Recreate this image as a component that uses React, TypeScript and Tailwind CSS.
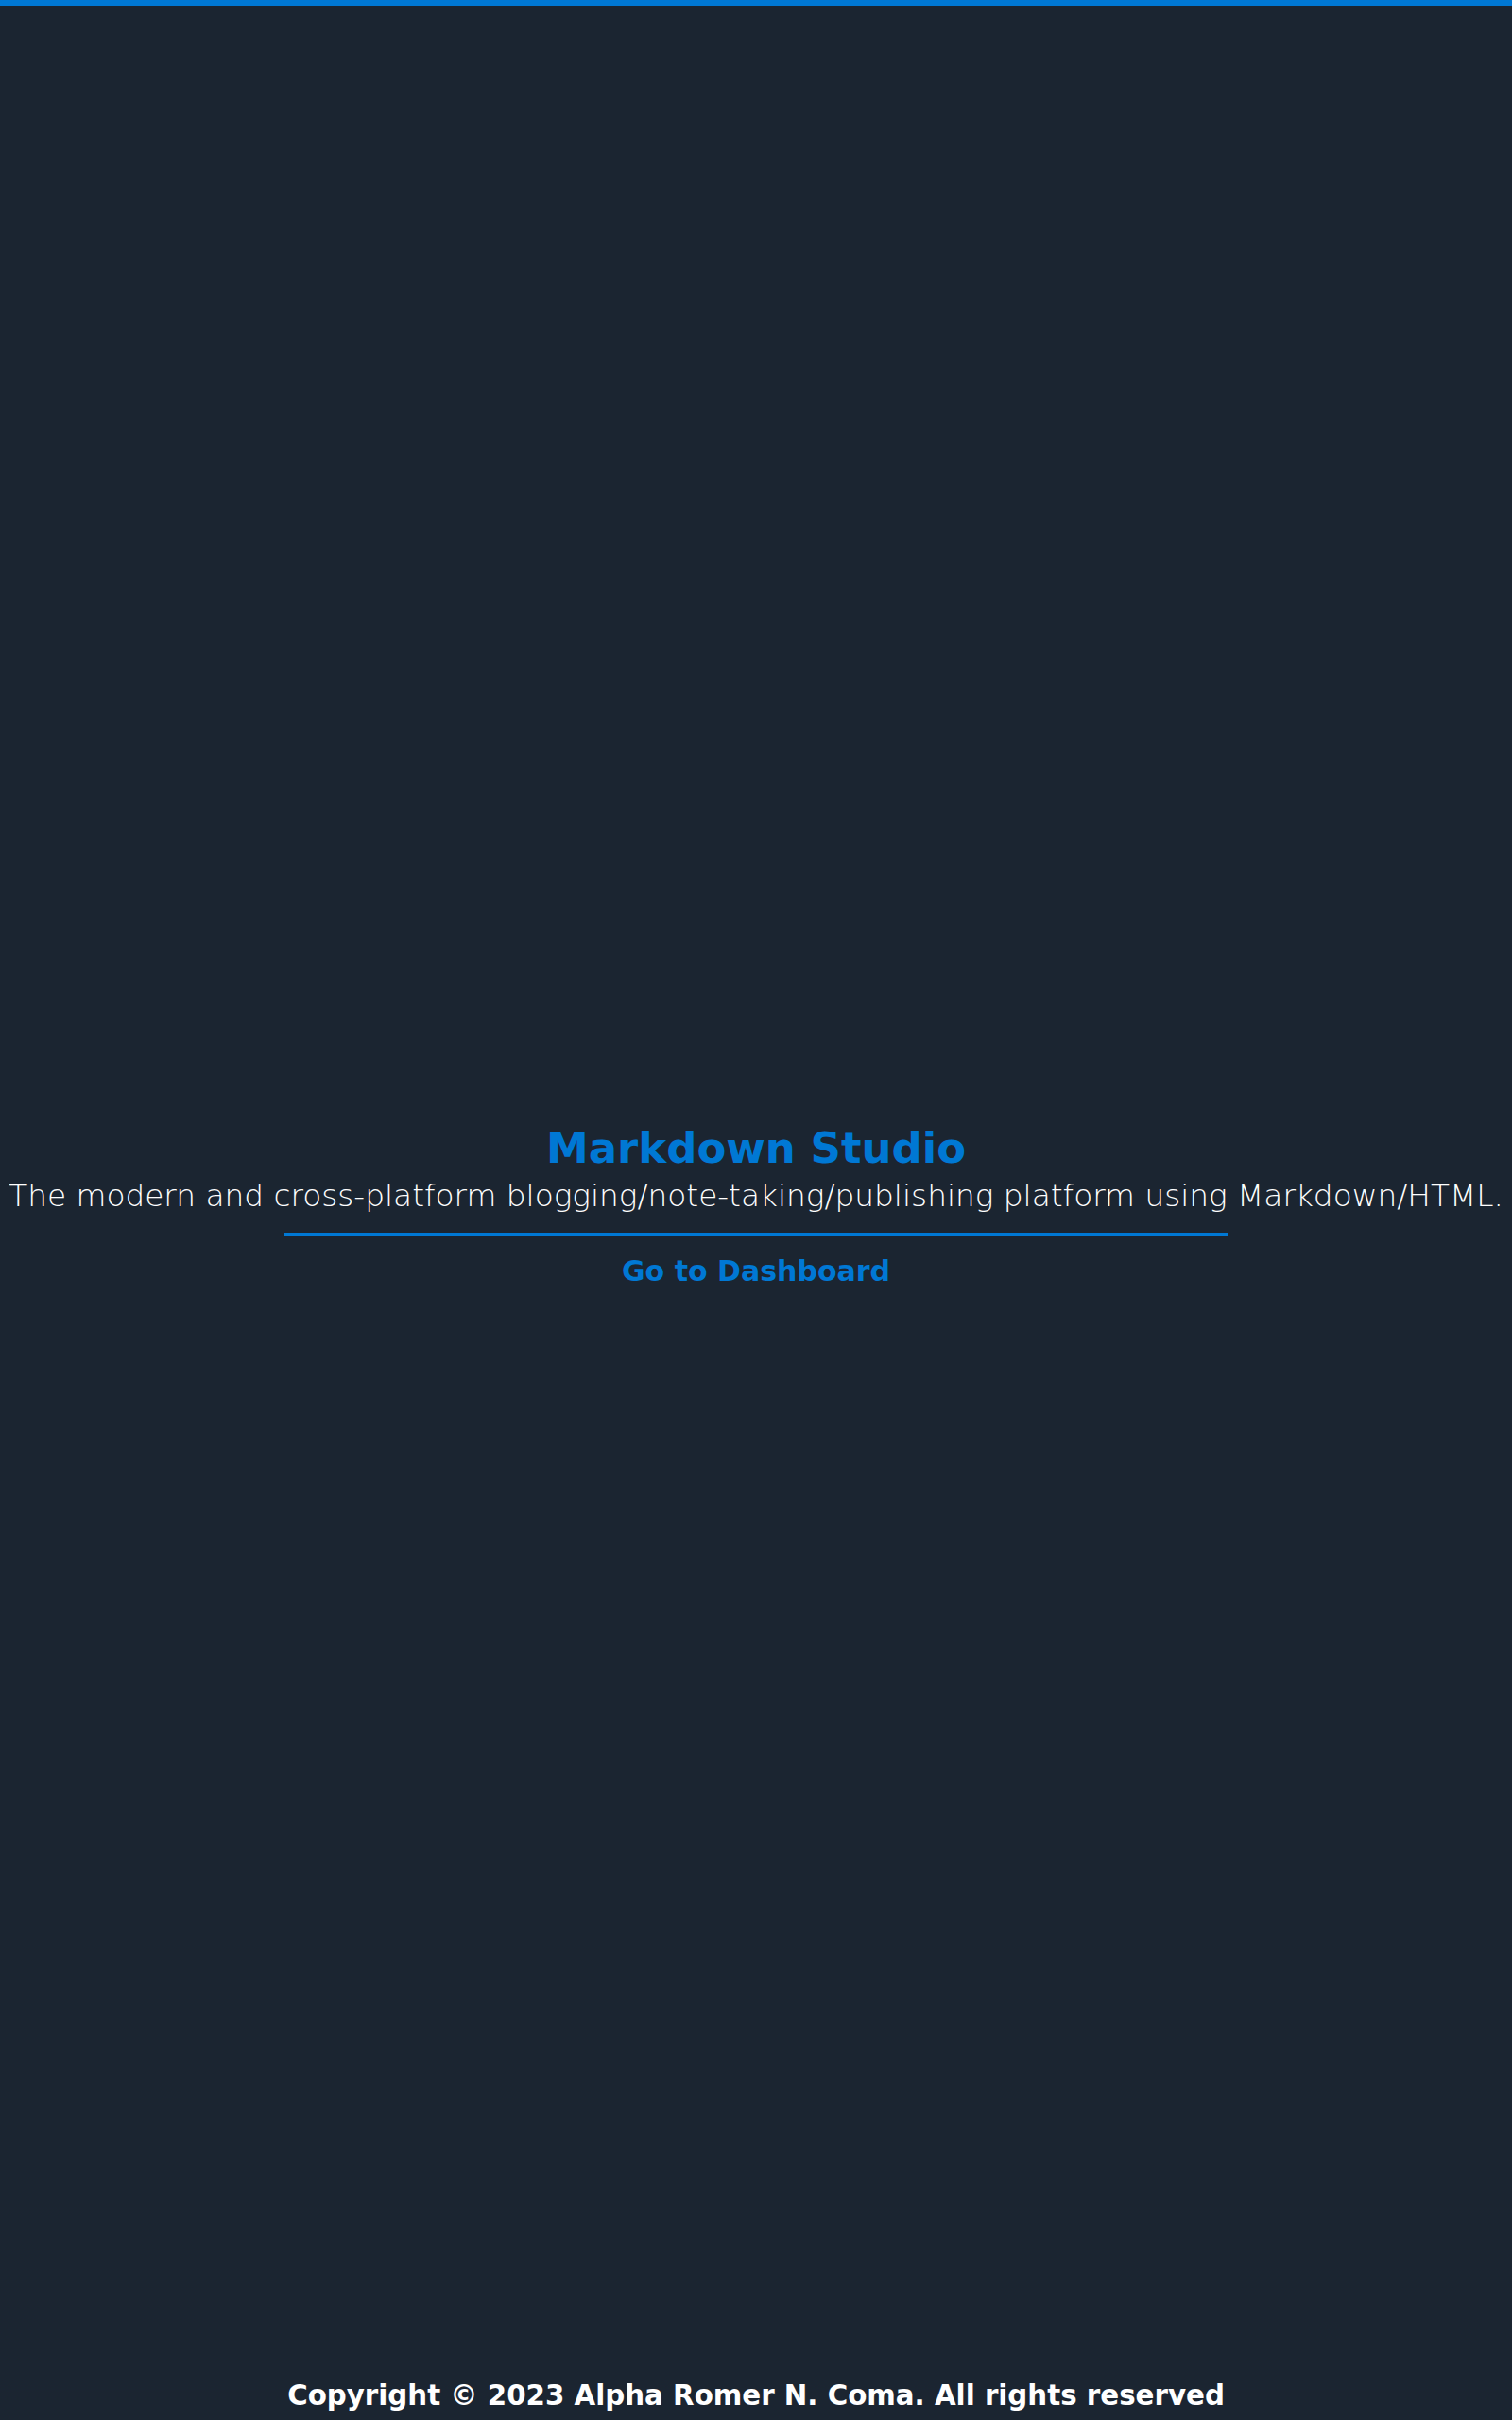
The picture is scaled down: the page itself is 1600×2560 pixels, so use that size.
export default function App() {
  return (
    <div className="flex min-h-screen flex-col border-t-[6px] border-[#0078d4] bg-[#1b2531] font-['DejaVu_Sans',sans-serif] text-white">
      <main className="flex flex-1 flex-col items-center justify-center pt-[32px]">
        <h1 className="text-[45px] leading-[56px] font-bold text-[#0078d4]">Markdown Studio</h1>
        <p className="text-[32.75px] leading-[44px] font-light">
          The modern and cross-platform blogging/note-taking/publishing platform using Markdown/HTML.
        </p>
        <hr className="mt-[17px] mb-[18px] w-[1000px] border-t-[3px] border-[#0078d4]" />
        <a href="#" className="text-[30px] leading-[40px] font-bold text-[#0078d4]">
          Go to Dashboard
        </a>
      </main>
      <footer className="pb-[6px] text-center text-[29.3px] leading-[40px] font-bold">
        Copyright © 2023 Alpha Romer N. Coma. All rights reserved
      </footer>
    </div>
  );
}
